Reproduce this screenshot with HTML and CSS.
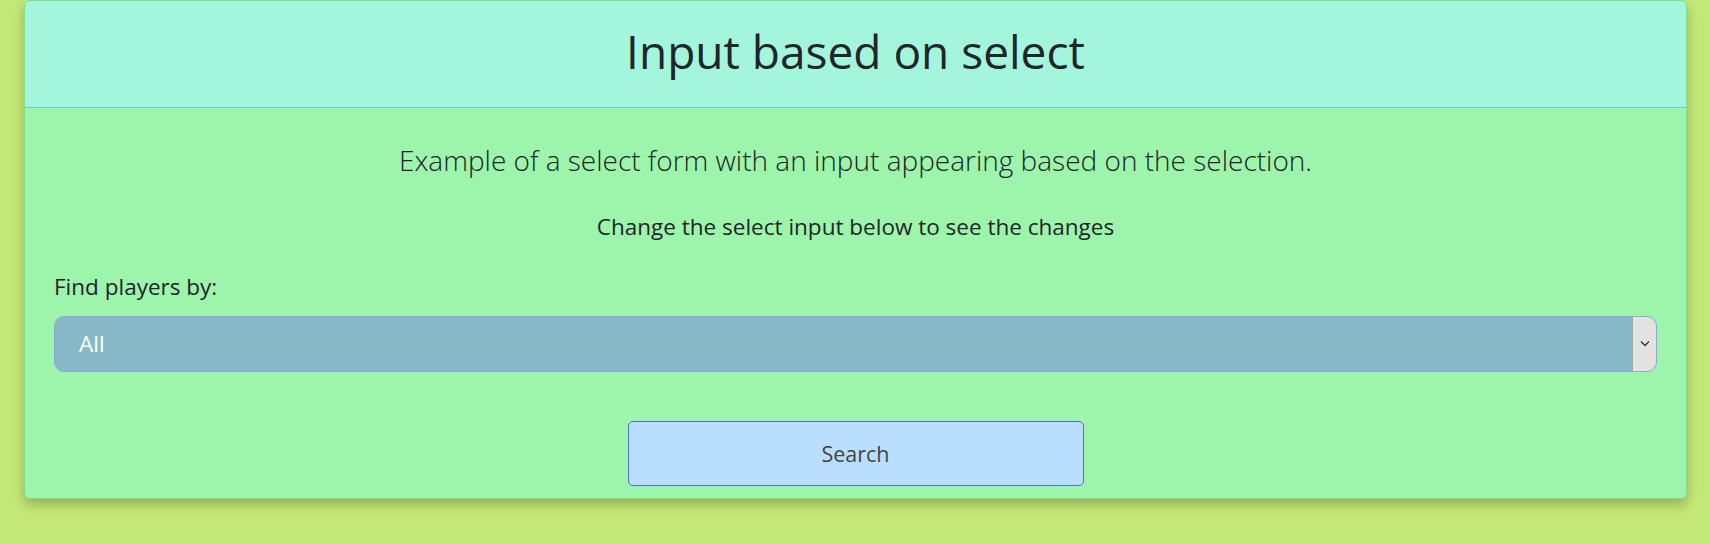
FILE: index.html
```html
<!DOCTYPE html>
<html lang="en">
<head>
<meta charset="utf-8">
<title>Input based on select</title>
<link rel="stylesheet" href="styles.css">
</head>
<body>
<div class="page">
  <div class="card">
    <div class="card-header">
      <h1 class="title">Input based on select</h1>
    </div>
    <div class="card-body">
      <p class="lead">Example of a select form with an input appearing based on the selection.</p>
      <p class="hint">Change the select input below to see the changes</p>
      <label class="label">Find players by:</label>
      <div class="select">
        <span class="select-value">All</span>
        <span class="select-arrow">
          <svg width="10" height="7" viewBox="0 0 10 7"><path d="M1 1.5 L5 5.5 L9 1.5" fill="none" stroke="#333" stroke-width="1.3"/></svg>
        </span>
      </div>
      <div class="actions">
        <button class="btn">Search</button>
      </div>
    </div>
  </div>
</div>
</body>
</html>
```

FILE: styles.css
```css
html, body {
  margin: 0;
  padding: 0;
}
body {
  background: #c4e878;
  font-family: "Open Sans", "Noto Sans", sans-serif;
  color: #212529;
  height: 544px;
}
.page {
  padding: 0 23px 0 24px;
}
.card {
  border: 1px solid #86dc8c;
  border-radius: 6px;
  overflow: hidden;
  box-shadow: 0 6px 12px rgba(60, 80, 20, 0.35);
  background: #9cf5aa;
}
.card-header {
  background: #a3f5dc;
  border-bottom: 1px solid #6cc4e4;
  height: 107px;
  box-sizing: border-box;
  padding-bottom: 4px;
  display: flex;
  align-items: center;
  justify-content: center;
}
.title {
  margin: 0;
  font-weight: 400;
  font-size: 46px;
  line-height: 1.2;
}
.card-body {
  padding: 34px 29px 12px;
  display: flex;
  flex-direction: column;
}
.lead {
  margin: 0;
  text-align: center;
  font-size: 28px;
  font-weight: 300;
  line-height: 1.3;
}
.hint {
  margin: 34px 0 0;
  text-align: center;
  font-size: 22.5px;
  line-height: 1.3;
}
.label {
  margin-top: 30px;
  font-size: 22.5px;
  line-height: 1.3;
}
.select {
  margin-top: 15px;
  height: 56px;
  box-sizing: border-box;
  background: #88b9c9;
  border: 1px solid #8fa8d8;
  border-radius: 10px;
  display: flex;
  align-items: center;
  overflow: hidden;
}
.select-value {
  flex: 1;
  padding-left: 24px;
  color: #ffffff;
  font-size: 22.5px;
}
.select-arrow {
  width: 23px;
  align-self: stretch;
  background: #e2e2e2;
  border-left: 1px solid #a8a8a8;
  display: flex;
  align-items: center;
  justify-content: center;
}
.actions {
  display: flex;
  justify-content: center;
  margin-top: 49px;
}
.btn {
  width: 456px;
  height: 65px;
  background: #badffe;
  border: 1px solid #4f6ee0;
  border-radius: 5px;
  color: #444;
  font-family: "Open Sans", "Noto Sans", sans-serif;
  font-size: 21.5px;
}
```
